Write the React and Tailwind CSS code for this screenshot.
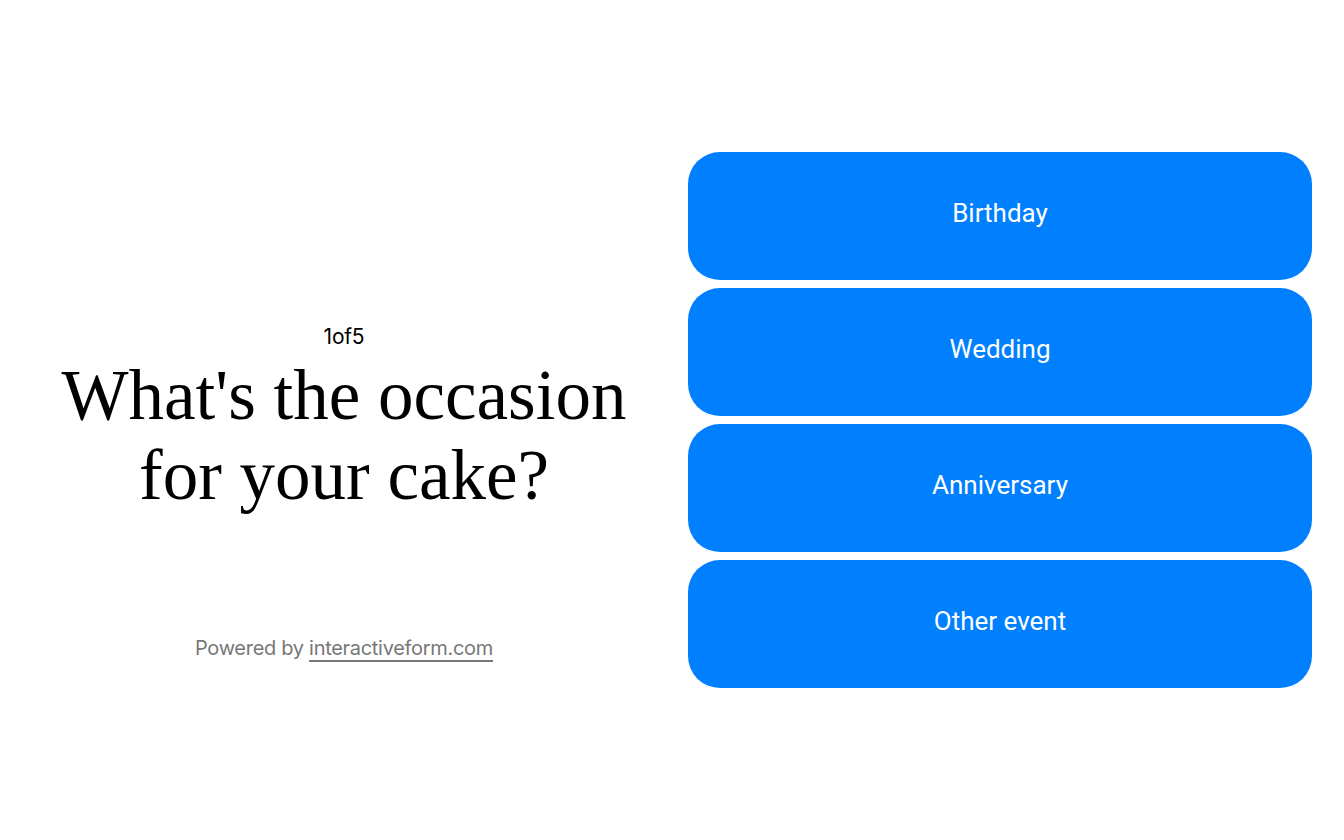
import React from 'react';

const options = ['Birthday', 'Wedding', 'Anniversary', 'Other event'];

export default function App() {
  return (
    <div className="w-full h-[840px] bg-white flex items-center px-8 gap-8">
      {/* question side */}
      <div className="w-[624px] self-stretch py-[152px]">
        <div className="h-full grid grid-rows-[1fr_auto_1fr] text-center">
          <div />
          <div className="flex flex-col items-center">
            <span className="text-[21px] leading-6 tracking-[-0.01em] text-black font-['Inter',sans-serif]">
              1of5
            </span>
            <h1 className="mt-[6px] text-[71px] leading-[80px] text-black font-['Liberation_Serif',serif]">
              What's the occasion
              <br />
              for your cake?
            </h1>
          </div>
          <div className="flex items-end justify-center pb-[28px]">
            <p className="text-[20px] leading-6 tracking-[-0.015em] text-[#777] font-['Inter',sans-serif]">
              Powered by{' '}
              <a href="#" className="underline decoration-2 underline-offset-[5px] decoration-[#777]">
                interactiveform.com
              </a>
            </p>
          </div>
        </div>
      </div>

      {/* answer buttons */}
      <div className="w-[624px] flex flex-col gap-2">
        {options.map(opt => (
          <button
            key={opt}
            className="h-32 w-full pb-1.5 rounded-[32px] bg-[#0080ff] text-white text-[26px] font-['Roboto',sans-serif]"
          >
            {opt}
          </button>
        ))}
      </div>
    </div>
  );
}
